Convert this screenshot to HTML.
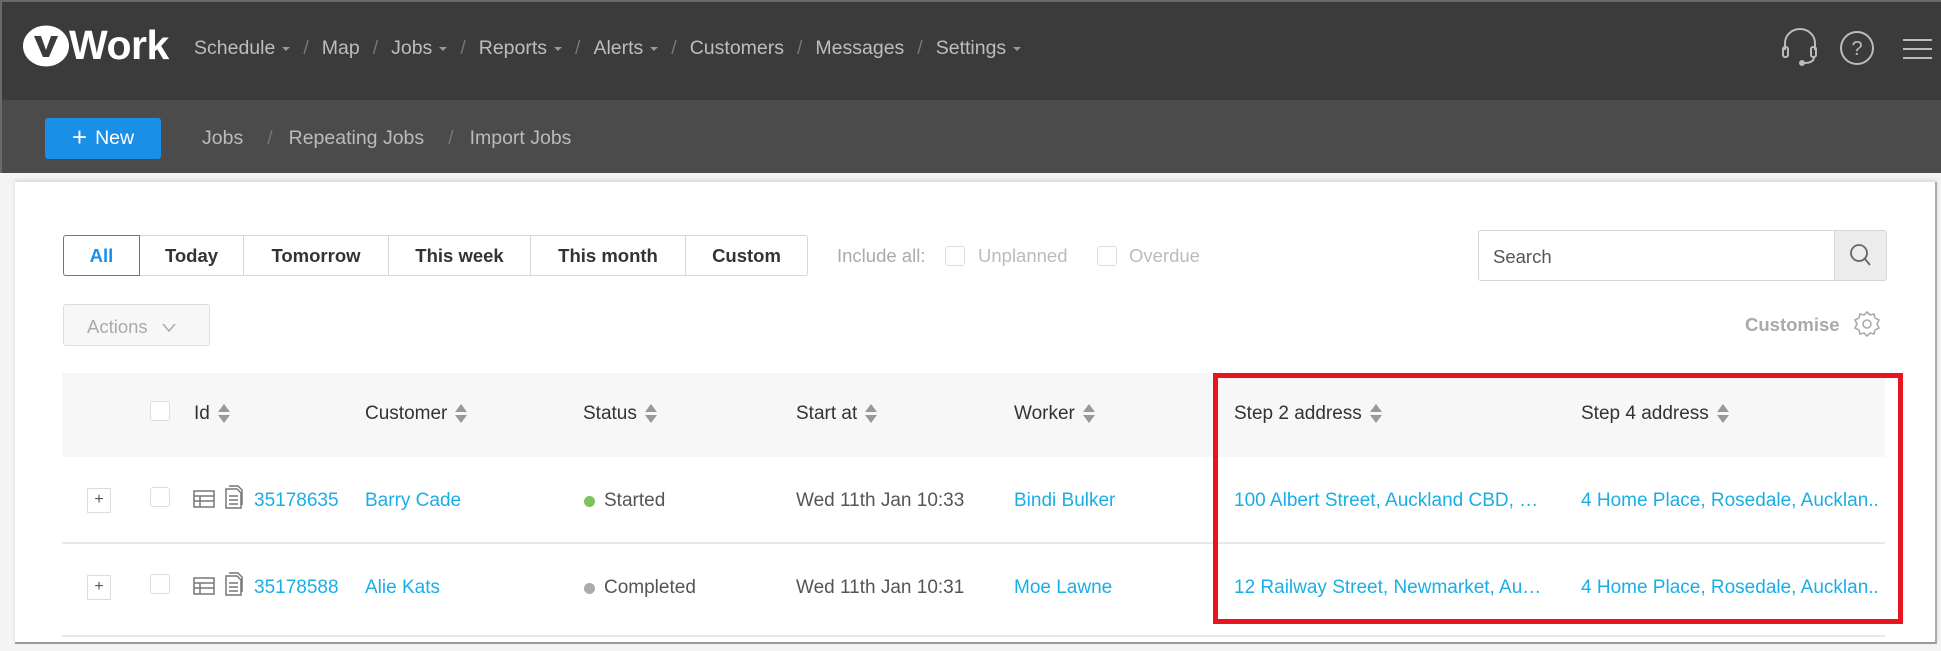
<!DOCTYPE html>
<html><head><meta charset="utf-8"><style>
*{box-sizing:border-box;margin:0;padding:0}
body{width:1941px;height:651px;overflow:hidden;background:#f4f4f4;font-family:"Liberation Sans",Arial,sans-serif;position:relative}
.abs{position:absolute}
#top{left:0;top:0;width:1941px;height:100px;background:#3b3b3b;border-top:2px solid #6a6a6a;border-left:2px solid #6a6a6a}
#sub{left:0;top:100px;width:1941px;height:73px;background:#4b4b4b;border-left:2px solid #6a6a6a}
.nav{top:37px;font-size:19.5px;color:#bdbdbd;white-space:nowrap}
.nav span.s{color:#777;margin:0 13px}
.car{display:inline-block;width:0;height:0;border-left:4px solid transparent;border-right:4px solid transparent;border-top:4px solid #999;vertical-align:middle;margin-left:7px}
#panel{left:15px;top:182px;width:1922px;height:462px;background:#fff;box-shadow:0 -2px 4px rgba(0,0,0,.12);border-bottom:2px solid #999;border-right:2px solid #aaa}
.fb{top:235px;height:41px;border:1px solid #d6d6d6;font-size:18.5px;font-weight:bold;color:#333;display:flex;align-items:center;justify-content:center}
.cb{width:20px;height:20px;border:1px solid #ddd;border-radius:3px;background:#fff}
.th{top:403px;font-size:19px;color:#333;white-space:nowrap}
.sort{display:inline-block;vertical-align:middle;margin-left:8px;width:12px;height:22px;position:relative}
.sort:before{content:"";position:absolute;left:0;top:1px;border-left:6px solid transparent;border-right:6px solid transparent;border-bottom:8px solid #999}
.sort:after{content:"";position:absolute;left:0;top:12px;border-left:6px solid transparent;border-right:6px solid transparent;border-top:8px solid #999}
.td{font-size:19px;white-space:nowrap;color:#555}
.lk{color:#1aaee6}
</style></head><body>
<div id="top" class="abs"></div>
<div id="sub" class="abs"></div>
<svg class="abs" style="left:22px;top:25px" width="48" height="42"><ellipse cx="24" cy="21" rx="23" ry="20.5" fill="#fff"/><path d="M12 11 L19 11 L24 25 L29 11 L36 11 L27 32 L21 32 Z" fill="#3b3b3b"/></svg>
<div class="abs" style="left:69px;top:22px;font-size:41px;font-weight:bold;color:#fff;letter-spacing:-0.5px">Work</div>
<div class="abs nav" style="left:194px">Schedule<i class="car"></i><span class="s">/</span>Map<span class="s">/</span>Jobs<i class="car"></i><span class="s">/</span>Reports<i class="car"></i><span class="s">/</span>Alerts<i class="car"></i><span class="s">/</span>Customers<span class="s">/</span>Messages<span class="s">/</span>Settings<i class="car"></i></div>
<svg class="abs" style="left:1780px;top:28px" width="40" height="40" fill="none" stroke="#bbb" stroke-width="2"><path d="M5 22 V15 A15 14 0 0 1 35 15 V22"/><rect x="3" y="19" width="5" height="10" rx="2"/><rect x="31" y="19" width="5" height="10" rx="2"/><path d="M34 29 Q34 35 24 35"/><circle cx="22" cy="35" r="2" fill="#bbb"/></svg>
<svg class="abs" style="left:1838px;top:29px" width="38" height="38" fill="none" stroke="#bbb" stroke-width="2"><circle cx="19" cy="19" r="16"/><text x="19" y="26" font-size="20" fill="#bbb" stroke="none" text-anchor="middle" font-family="Liberation Sans">?</text></svg>
<div class="abs" style="left:1903px;top:39px;width:29px;height:2px;background:#bbb"></div>
<div class="abs" style="left:1903px;top:48px;width:29px;height:2px;background:#bbb"></div>
<div class="abs" style="left:1903px;top:57px;width:29px;height:2px;background:#bbb"></div>
<div class="abs" style="left:45px;top:118px;width:116px;height:41px;background:#1a8fe8;border-radius:3px;color:#fff;font-size:19.5px;display:flex;align-items:center;justify-content:center"><span style="font-size:26px;font-weight:300;margin-right:8px;margin-top:-3px">+</span>New</div>
<div class="abs" style="left:202px;top:127px;font-size:19.5px;color:#bbb;white-space:nowrap">Jobs<span style="color:#777;margin:0 16px 0 24px">/</span>Repeating Jobs<span style="color:#777;margin:0 16px 0 24px">/</span>Import Jobs</div>
<div id="panel" class="abs"></div>
<div class="abs fb" style="left:63px;width:77px;border-color:#1a8fe8;color:#1a8fe8;border-radius:3px 0 0 3px;z-index:2">All</div>
<div class="abs fb" style="left:139px;width:105px">Today</div>
<div class="abs fb" style="left:243px;width:146px">Tomorrow</div>
<div class="abs fb" style="left:388px;width:143px">This week</div>
<div class="abs fb" style="left:530px;width:156px">This month</div>
<div class="abs fb" style="left:685px;width:123px;border-radius:0 3px 3px 0">Custom</div>
<div class="abs" style="left:837px;top:245px;font-size:18.5px;color:#aaa">Include all:</div>
<div class="abs cb" style="left:945px;top:246px"></div>
<div class="abs" style="left:978px;top:245px;font-size:18.5px;color:#bbb">Unplanned</div>
<div class="abs cb" style="left:1097px;top:246px"></div>
<div class="abs" style="left:1129px;top:245px;font-size:18.5px;color:#bbb">Overdue</div>
<div class="abs" style="left:1478px;top:230px;width:409px;height:51px;border:1px solid #d6d6d6;border-radius:3px;overflow:hidden"><div style="position:absolute;left:14px;top:15px;font-size:18.5px;color:#555">Search</div><div style="position:absolute;right:0;top:0;width:52px;height:51px;background:#ececec;border-left:1px solid #d6d6d6"></div></div>
<svg class="abs" style="left:1848px;top:242px" width="26" height="26" fill="none" stroke="#666" stroke-width="1.8"><circle cx="11" cy="11" r="8"/><path d="M17 17 L22 23"/></svg>
<div class="abs" style="left:63px;top:304px;width:147px;height:42px;border:1px solid #ddd;border-radius:3px;background:#f7f7f7;color:#aaa;font-size:18.5px;padding:11px 0 0 23px">Actions<svg style="margin-left:14px" width="14" height="10" fill="none" stroke="#aaa" stroke-width="1.5"><path d="M1 1 L7 8 L13 1"/></svg></div>
<div class="abs" style="left:1745px;top:314px;font-size:18.5px;font-weight:bold;color:#aaa">Customise</div>
<svg class="abs" style="left:1853px;top:310px" width="28" height="28" fill="none" stroke="#aaa" stroke-width="1.6"><path d="M14 2 L17 5 L21 4 L22 8 L26 10 L24 14 L26 18 L22 20 L21 24 L17 23 L14 26 L11 23 L7 24 L6 20 L2 18 L4 14 L2 10 L6 8 L7 4 L11 5 Z"/><circle cx="14" cy="14" r="4"/></svg>
<div class="abs" style="left:62px;top:373px;width:1823px;height:84px;background:#f7f7f7"></div>
<div class="abs" style="left:62px;top:542px;width:1823px;height:2px;background:#e8e8e8"></div>
<div class="abs" style="left:62px;top:635px;width:1823px;height:2px;background:#e8e8e8"></div>
<div class="abs cb" style="left:150px;top:401px"></div>
<div class="abs th" style="left:194px">Id<i class="sort"></i></div>
<div class="abs th" style="left:365px">Customer<i class="sort"></i></div>
<div class="abs th" style="left:583px">Status<i class="sort"></i></div>
<div class="abs th" style="left:796px">Start at<i class="sort"></i></div>
<div class="abs th" style="left:1014px">Worker<i class="sort"></i></div>
<div class="abs th" style="left:1234px">Step 2 address<i class="sort"></i></div>
<div class="abs th" style="left:1581px">Step 4 address<i class="sort"></i></div>

<div class="abs" style="left:87px;top:488px;width:24px;height:25px;border:1px solid #ddd;text-align:center;font-size:16px;line-height:22px;color:#555">+</div>
<div class="abs cb" style="left:150px;top:487px"></div>
<svg class="abs" style="left:193px;top:490px" width="22" height="18" fill="none" stroke="#777" stroke-width="1.5"><rect x="1" y="1" width="20" height="16"/><path d="M1 6 H21 M1 11 H21 M7 6 V17"/></svg>
<svg class="abs" style="left:225px;top:485px" width="18" height="24" fill="none" stroke="#777" stroke-width="1.5"><path d="M1 4 H12 L16 8 V23 H1 Z M4 1 H13 L17 5 V20 M4 11 H13 M4 15 H13 M4 19 H13"/></svg>
<div class="abs td lk" style="left:254px;top:490px">35178635</div>
<div class="abs td lk" style="left:365px;top:490px">Barry Cade</div>
<div class="abs" style="left:584px;top:496px;width:11px;height:11px;border-radius:50%;background:#7cc35a"></div>
<div class="abs td" style="left:604px;top:490px">Started</div>
<div class="abs td" style="left:796px;top:490px">Wed 11th Jan 10:33</div>
<div class="abs td lk" style="left:1014px;top:490px">Bindi Bulker</div>
<div class="abs td lk" style="left:1234px;top:490px">100 Albert Street, Auckland CBD, …</div>
<div class="abs td lk" style="left:1581px;top:490px">4 Home Place, Rosedale, Aucklan..</div>

<div class="abs" style="left:87px;top:575px;width:24px;height:25px;border:1px solid #ddd;text-align:center;font-size:16px;line-height:22px;color:#555">+</div>
<div class="abs cb" style="left:150px;top:574px"></div>
<svg class="abs" style="left:193px;top:577px" width="22" height="18" fill="none" stroke="#777" stroke-width="1.5"><rect x="1" y="1" width="20" height="16"/><path d="M1 6 H21 M1 11 H21 M7 6 V17"/></svg>
<svg class="abs" style="left:225px;top:572px" width="18" height="24" fill="none" stroke="#777" stroke-width="1.5"><path d="M1 4 H12 L16 8 V23 H1 Z M4 1 H13 L17 5 V20 M4 11 H13 M4 15 H13 M4 19 H13"/></svg>
<div class="abs td lk" style="left:254px;top:577px">35178588</div>
<div class="abs td lk" style="left:365px;top:577px">Alie Kats</div>
<div class="abs" style="left:584px;top:583px;width:11px;height:11px;border-radius:50%;background:#aaa"></div>
<div class="abs td" style="left:604px;top:577px">Completed</div>
<div class="abs td" style="left:796px;top:577px">Wed 11th Jan 10:31</div>
<div class="abs td lk" style="left:1014px;top:577px">Moe Lawne</div>
<div class="abs td lk" style="left:1234px;top:577px">12 Railway Street, Newmarket, Au…</div>
<div class="abs td lk" style="left:1581px;top:577px">4 Home Place, Rosedale, Aucklan..</div>

<div class="abs" style="left:1213px;top:373px;width:690px;height:251px;border:5px solid #e8141f"></div>
</body></html>
